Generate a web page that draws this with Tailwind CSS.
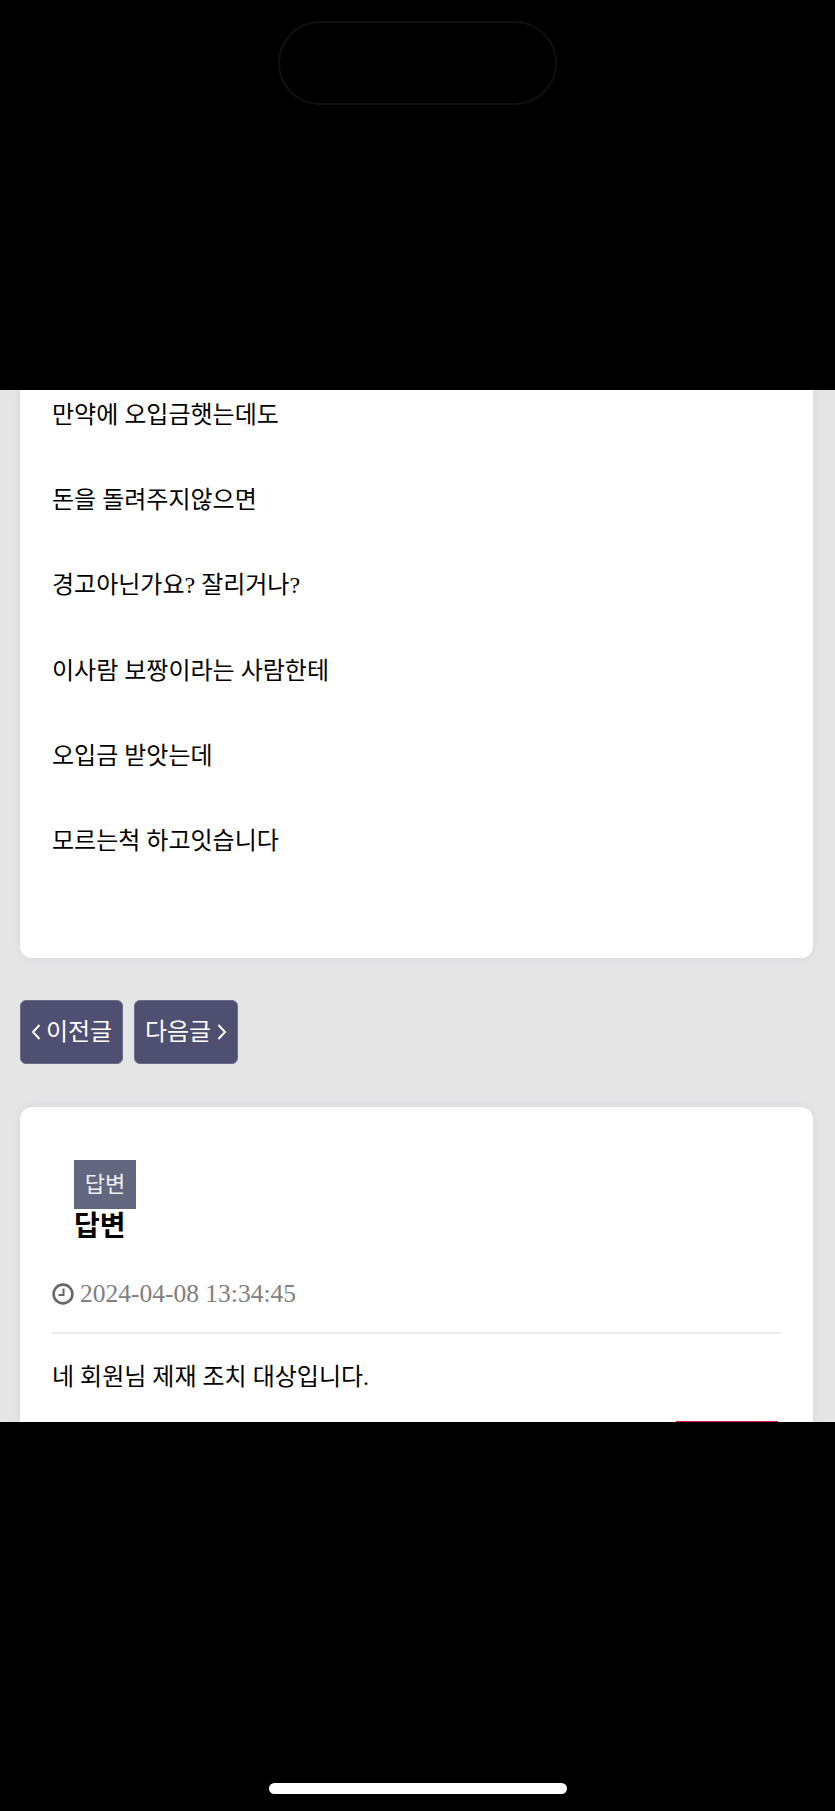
<!DOCTYPE html>
<html lang="ko">
<head>
  <meta charset="UTF-8" />
  <meta name="viewport" content="width=device-width,initial-scale=1.0" />
  <title>답변</title>
  <script src="https://cdn.jsdelivr.net/npm/@tailwindcss/browser@4"></script>
</head>
<body class="h-[1811px] flex flex-col bg-black overflow-hidden font-['Liberation_Serif','Noto_Sans_CJK_KR',serif]">

  <!-- top black area with the camera pill -->
  <div class="relative h-[390px] shrink-0 bg-black">
    <div class="absolute left-[278px] top-[21px] w-[279px] h-[84px] rounded-[42px] border-2 border-[#101010]"></div>
  </div>

  <!-- page content, cut off by the black bars -->
  <main class="h-[1032px] shrink-0 overflow-hidden bg-[#e5e5e6] pl-[20px] pr-[22px]">
    <section class="h-[568px] bg-white rounded-b-xl shadow-[0_0_7px_#d4d4e2] px-[32px] text-[24px] leading-[50px] text-black">
      <div class="flex flex-col gap-[35.2px]">
        <p>만약에 오입금햇는데도</p>
        <p>돈을 돌려주지않으면</p>
        <p>경고아닌가요? 잘리거나?</p>
        <p>이사람 보짱이라는 사람한테</p>
        <p>오입금 받앗는데</p>
        <p>모르는척 하고잇습니다</p>
      </div>
    </section>

    <nav class="flex gap-[11px] mt-[42px]">
      <a class="w-[103px] h-[64px] flex items-center justify-center gap-[5px] rounded-md bg-[#4f5071] border border-[#6b6c88] text-white text-[24px]">
        <svg class="w-[10px] h-[18px]" viewBox="0 0 10 18" fill="none" stroke="white" stroke-width="2"><path d="M8.5 2 L2 9 L8.5 16" /></svg>
        <span>이전글</span>
      </a>
      <a class="w-[104px] h-[64px] flex items-center justify-center gap-[6px] rounded-md bg-[#4f5071] border border-[#6b6c88] text-white text-[24px]">
        <span>다음글</span>
        <svg class="w-[10px] h-[18px]" viewBox="0 0 10 18" fill="none" stroke="white" stroke-width="2"><path d="M1.5 2 L8 9 L1.5 16" /></svg>
      </a>
    </nav>

    <section class="mt-[43px] h-[400px] bg-white rounded-t-xl shadow-[0_0_7px_#d4d4e2] px-[32px] pt-[53px]">
      <div class="pl-[22px]">
        <span class="flex items-center justify-center w-[62px] h-[49px] bg-[#62667f] text-white/90 text-[22px]">답변</span>
        <h2 class="text-[28px] leading-[36px] font-bold text-black">답변</h2>
      </div>
      <div class="flex items-center gap-[6px] mt-[31px] text-[25.5px] leading-[36px] text-[#808080]">
        <svg class="w-[22px] h-[22px]" viewBox="0 0 22 22" fill="none" stroke="#666" stroke-width="2.6"><circle cx="11" cy="11" r="9.4" /><path d="M11.5 5.5 V12 H6.5" stroke-width="2" /></svg>
        <span>2024-04-08 13:34:45</span>
      </div>
      <hr class="mt-[20px] border-0 h-[2px] bg-[#ebebeb]" />
      <p class="mt-[23px] text-[24px] leading-[40px] text-black">네 회원님 제재 조치 대상입니다.</p>
      <div class="flex justify-end pr-[3px] mt-[24px]">
        <div class="w-[102px] h-[40px] bg-[#dc143c]"></div>
      </div>
    </section>
  </main>

  <!-- bottom black area with the home bar -->
  <div class="flex-1 bg-black flex justify-center pt-[361px]">
    <div class="w-[298px] h-[11px] rounded-full bg-white"></div>
  </div>
</body>
</html>
